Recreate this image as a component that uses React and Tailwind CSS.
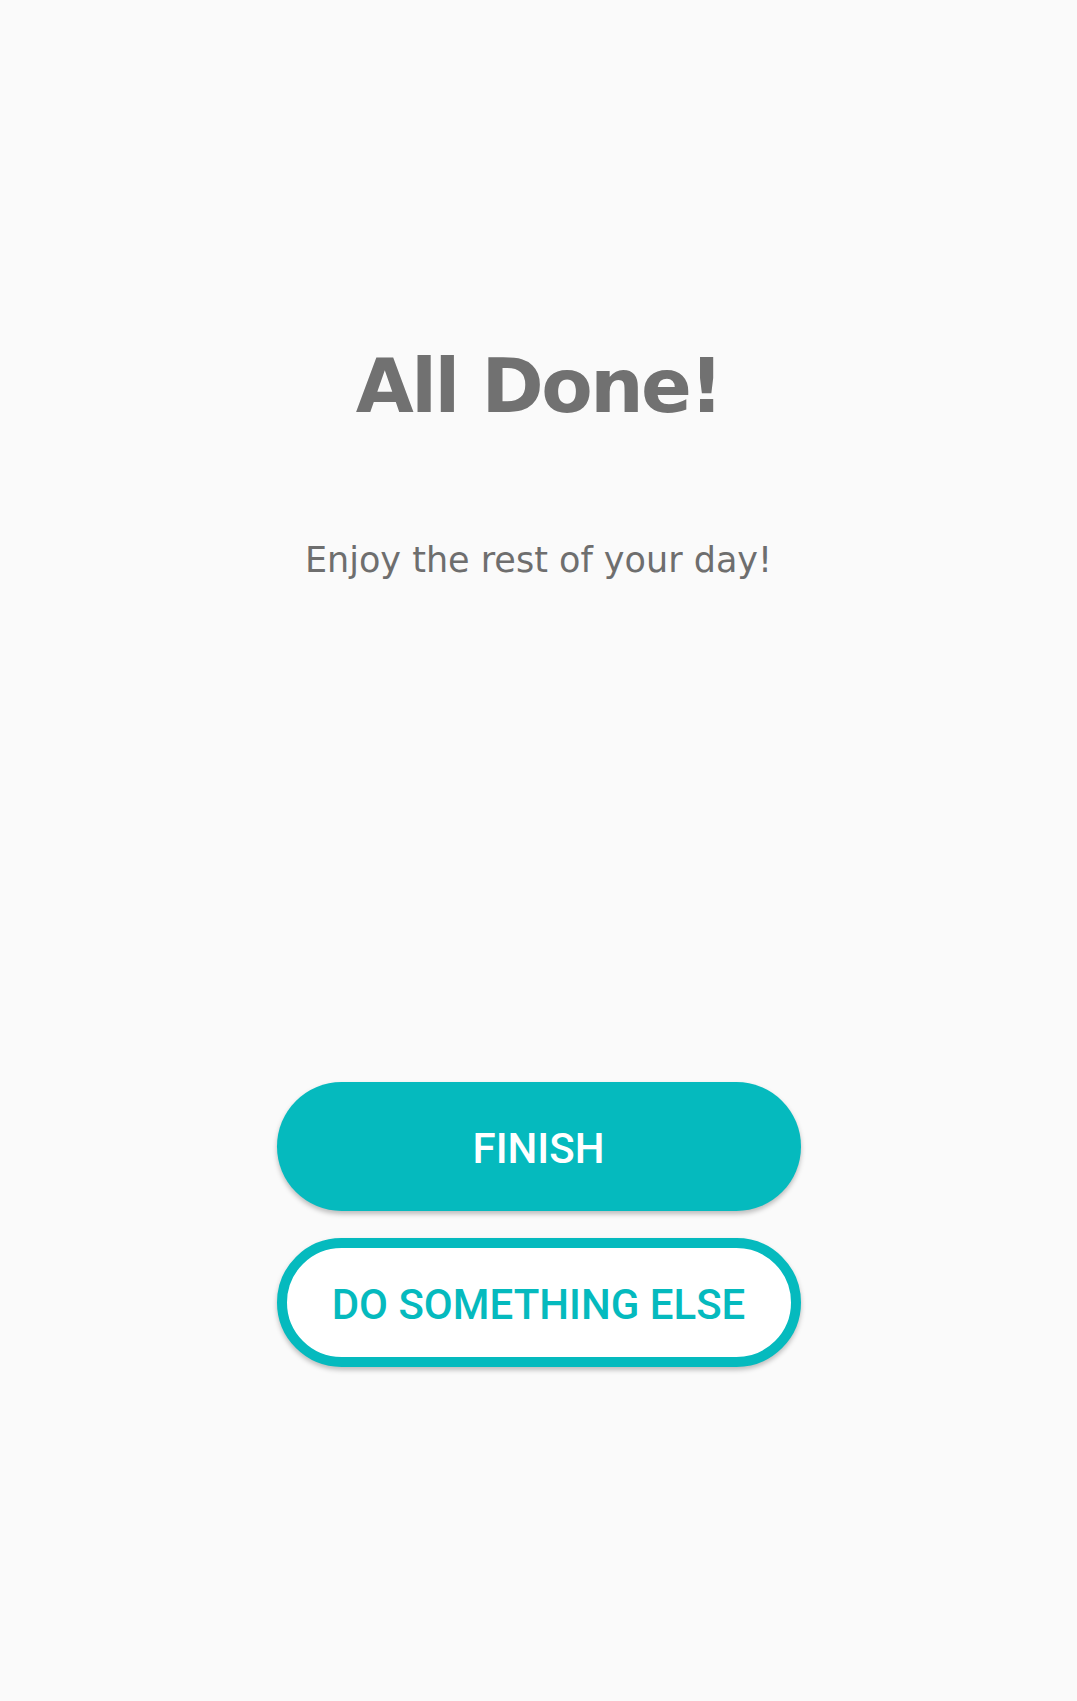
export default function App() {
  return (
    <div className="min-h-[1701px] w-full bg-[#fafafa] flex flex-col items-center font-['DejaVu_Sans',sans-serif]">
      <h1 className="mt-[338px] text-[75px] leading-[96px] font-bold text-[#717171] tracking-[-2.5px]">
        All Done!
      </h1>
      <p className="mt-[104px] text-[35px] leading-[44px] text-[#6e6e6e]">
        Enjoy the rest of your day!
      </p>
      <div className="mt-[500px] flex flex-col gap-[27px] w-[524px] font-['Roboto',sans-serif]">
        <button className="h-[129px] w-full rounded-full bg-[#05babe] text-white text-[42px] font-medium pt-[4px] shadow-[0_3px_5px_rgba(0,0,0,0.25)]">
          FINISH
        </button>
        <button className="h-[129px] w-full rounded-full bg-white border-[10px] border-[#05babe] text-[#05babe] text-[42px] font-medium pt-[4px] shadow-[0_3px_5px_rgba(0,0,0,0.25)]">
          DO SOMETHING ELSE
        </button>
      </div>
    </div>
  );
}
